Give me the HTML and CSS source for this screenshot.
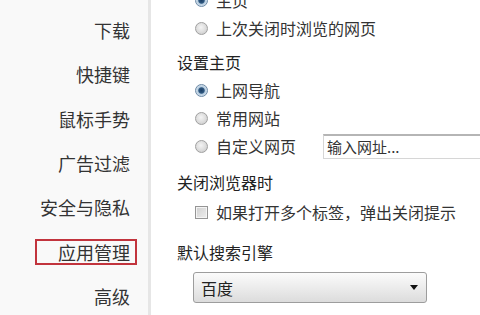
FILE: index.html
```html
<!DOCTYPE html>
<html lang="zh-CN">
<head>
<meta charset="utf-8">
<link rel="stylesheet" href="styles.css">
</head>
<body>
<div class="page">
  <nav class="sidebar">
    <div class="nav-item"><span class="nav-label">下载</span></div>
    <div class="nav-item"><span class="nav-label">快捷键</span></div>
    <div class="nav-item"><span class="nav-label">鼠标手势</span></div>
    <div class="nav-item"><span class="nav-label">广告过滤</span></div>
    <div class="nav-item"><span class="nav-label">安全与隐私</span></div>
    <div class="nav-item"><span class="nav-label active">应用管理</span></div>
    <div class="nav-item"><span class="nav-label">高级</span></div>
  </nav>
  <main class="content">
    <div class="opt first"><span class="radio checked"></span><span>主页</span></div>
    <div class="opt"><span class="radio"></span><span>上次关闭时浏览的网页</span></div>
    <div class="heading h-home">设置主页</div>
    <div class="opt opt-after-head"><span class="radio checked"></span><span>上网导航</span></div>
    <div class="opt"><span class="radio"></span><span>常用网站</span></div>
    <div class="opt"><span class="radio"></span><span>自定义网页</span><span class="url-input">输入网址...</span></div>
    <div class="heading h-close">关闭浏览器时</div>
    <div class="opt opt-check"><span class="checkbox"></span><span>如果打开多个标签，弹出关闭提示</span></div>
    <div class="heading h-search">默认搜索引擎</div>
    <div class="select"><span>百度</span><span class="arrow"></span></div>
  </main>
</div>
</body>
</html>
```
FILE: styles.css
```css
html, body {
  margin: 0;
  padding: 0;
  background: #ffffff;
  overflow: hidden;
}
body {
  width: 480px;
  height: 315px;
  font-family: "Noto Sans CJK SC", "Microsoft YaHei", sans-serif;
  color: #333;
}
.page {
  display: flex;
  height: 315px;
}
.sidebar {
  width: 148px;
  flex: none;
  background: #f9f9f9;
  border-right: 3px solid #e6e6e6;
  padding-top: 8px;
}
.nav-item {
  height: 44.3px;
  display: flex;
  align-items: center;
  justify-content: flex-end;
  padding-right: 11px;
}
.nav-label {
  font-size: 18px;
  line-height: 22px;
  color: #333;
  padding: 0 5px 0 0;
  border: 2px solid transparent;
}
.nav-label.active {
  border-color: #c2343d;
  padding-left: 21px;
}
.content {
  flex: 1;
  padding-left: 26px;
  margin-top: -14px;
  font-size: 16px;
  overflow: hidden;
}
.opt {
  height: 28px;
  display: flex;
  align-items: center;
  margin-left: 18px;
  white-space: nowrap;
  color: #333;
}
.opt-after-head { margin-top: 2px; }
.opt-check { margin-top: 4px; }
.heading {
  height: 24px;
  line-height: 24px;
  color: #222;
}
.h-home { margin-top: 8px; }
.h-close { margin-top: 10px; }
.h-search { margin-top: 14px; }
.radio {
  width: 11px;
  height: 11px;
  border-radius: 50%;
  border: 1px solid #a0a0a0;
  background: radial-gradient(circle at 45% 40%, #f4f4f4 0%, #dedede 50%, #c4c4c4 100%);
  margin-right: 8px;
  flex: none;
}
.radio.checked {
  border-color: #6d8aa6;
  background: radial-gradient(circle at 50% 50%, #1d3f66 0%, #2f5880 35%, #b7cde0 48%, #eef3f8 100%);
}
.checkbox {
  width: 11px;
  height: 11px;
  border: 1px solid #959595;
  background: linear-gradient(135deg, #cfcfcf, #eeeeee);
  box-shadow: inset 0 0 0 1px #f4f4f4;
  margin-right: 8px;
  flex: none;
}
.url-input {
  margin-left: 27px;
  width: 180px;
  height: 22px;
  flex: none;
  border: 1px solid #d6d6d6;
  border-top: 2px solid #b5b5b5;
  background: #fff;
  font-size: 15px;
  line-height: 22px;
  padding-left: 3px;
  color: #333;
}
.select {
  margin-top: 8px;
  margin-left: 16px;
  width: 234px;
  height: 31px;
  box-sizing: border-box;
  border: 1px solid #9d9d9d;
  border-radius: 3px;
  background: linear-gradient(#fbfbfb, #ececec 50%, #dcdcdc);
  display: flex;
  align-items: center;
  justify-content: space-between;
  padding: 0 8px 0 7px;
  color: #222;
}
.arrow {
  width: 0;
  height: 0;
  border-left: 4px solid transparent;
  border-right: 4px solid transparent;
  border-top: 5px solid #111;
}
```
